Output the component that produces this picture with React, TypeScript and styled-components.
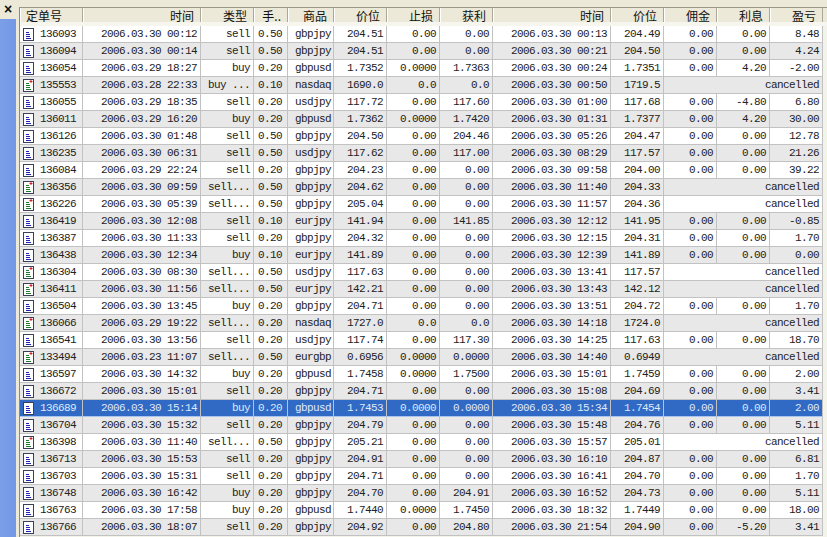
import * as React from 'react';
import styled, { createGlobalStyle } from 'styled-components';

const COLUMNS = '63px 118px 53px 34px 46px 53px 53px 53px 118px 53px 53px 53px 53px';

const GlobalStyle = createGlobalStyle`
  html, body {
    margin: 0;
    padding: 0;
    width: 827px;
    height: 537px;
    overflow: hidden;
    background: #ece9d8;
  }
`;

const Page = styled.div`
  display: flex;
  width: 827px;
  height: 537px;
  overflow: hidden;
  font-family: "Liberation Mono", "DejaVu Sans Mono", monospace;
  font-size: 11px;
  letter-spacing: -0.6px;
  color: #222;
`;

const Sidebar = styled.aside`
  display: flex;
  flex-direction: column;
  width: 16px;
  flex: none;
`;

const CloseBar = styled.div`
  height: 19px;
  flex: none;
  background: #ece9d8;
  color: #111;
  font: bold 14px/19px "Liberation Sans", sans-serif;
  letter-spacing: 0;
  text-align: center;
`;

const SideFill = styled.div`
  flex: 1;
  background: linear-gradient(90deg, #7c9fe8 0%, #7497e6 100%);
`;

const Gutter = styled.div`
  width: 3px;
  flex: none;
  background: #ece9d8;
`;

const TablePanel = styled.main`
  flex: 1;
  margin-top: 7px;
  border-top: 1px solid #9a9888;
  border-left: 1px solid #8c8a7c;
  background: #f4f3ea;
`;

const HeaderRow = styled.div`
  display: grid;
  grid-template-columns: ${COLUMNS};
  height: 14px;
  padding-bottom: 4px;
  background: linear-gradient(180deg, #ece9d8 0 14px, #f6f5ee 14px 100%);
`;

const HeaderCell = styled.div<{ $left?: boolean }>`
  box-sizing: border-box;
  height: 14px;
  padding: 0 6px 0 5px;
  background: #ece9d8;
  border-left: 1px solid #fff;
  border-right: 1px solid #aca899;
  font: 12px/15px "Noto Sans CJK SC", "Liberation Sans", sans-serif;
  letter-spacing: 0;
  color: #111;
  text-align: ${(p) => (p.$left ? 'left' : 'right')};
  white-space: nowrap;
`;

const Row = styled.div<{ $shade: boolean; $selected: boolean }>`
  display: grid;
  grid-template-columns: ${COLUMNS};
  width: 803px;
  height: 17px;
  box-sizing: border-box;
  border-bottom: 1px solid ${(p) => (p.$selected ? '#a9c4ee' : '#c2c2c2')};
  background: ${(p) => (p.$selected ? '#316ac5' : p.$shade ? '#e8e8e8' : '#fff')};
  color: ${(p) => (p.$selected ? '#dfe9fa' : '#222')};
`;

const Cell = styled.div<{ $span?: number; $inset?: number }>`
  box-sizing: border-box;
  grid-column: span ${(p) => p.$span ?? 1};
  padding: 0 ${(p) => p.$inset ?? 3}px 0 2px;
  border-right: 1px solid #c2c2c2;
  line-height: 16px;
  text-align: right;
  white-space: pre;
  overflow: hidden;
`;

const TicketCell = styled(Cell)`
  display: flex;
  align-items: center;
  gap: 6px;
  padding: 0 0 0 3px;
  text-align: left;
`;

const HEADERS = ['定单号', '时间', '类型', '手..', '商品', '价位', '止损', '获利', '时间', '价位', '佣金', '利息', '盈亏'];

type Order = [string, string, string, string, string, string, string, string, string, string, ...string[]];

const RAW = `136093|03.30 00:12|sell|0.50|gbpjpy|204.51|0.00|0.00|00:13|204.49|0.00|0.00|8.48
136094|03.30 00:14|sell|0.50|gbpjpy|204.51|0.00|0.00|00:21|204.50|0.00|0.00|4.24
136054|03.29 18:27|buy|0.20|gbpusd|1.7352|0.0000|1.7363|00:24|1.7351|0.00|4.20|-2.00
135553|03.28 22:33|buy ...|0.10|nasdaq|1690.0|0.0|0.0|00:50|1719.5
136055|03.29 18:35|sell|0.20|usdjpy|117.72|0.00|117.60|01:00|117.68|0.00|-4.80|6.80
136011|03.29 16:20|buy|0.20|gbpusd|1.7362|0.0000|1.7420|01:31|1.7377|0.00|4.20|30.00
136126|03.30 01:48|sell|0.50|gbpjpy|204.50|0.00|204.46|05:26|204.47|0.00|0.00|12.78
136235|03.30 06:31|sell|0.50|usdjpy|117.62|0.00|117.00|08:29|117.57|0.00|0.00|21.26
136084|03.29 22:24|sell|0.20|gbpjpy|204.23|0.00|0.00|09:58|204.00|0.00|0.00|39.22
136356|03.30 09:59|sell...|0.50|gbpjpy|204.62|0.00|0.00|11:40|204.33
136226|03.30 05:39|sell...|0.50|gbpjpy|205.04|0.00|0.00|11:57|204.36
136419|03.30 12:08|sell|0.10|eurjpy|141.94|0.00|141.85|12:12|141.95|0.00|0.00|-0.85
136387|03.30 11:33|sell|0.20|gbpjpy|204.32|0.00|0.00|12:15|204.31|0.00|0.00|1.70
136438|03.30 12:34|buy|0.10|eurjpy|141.89|0.00|0.00|12:39|141.89|0.00|0.00|0.00
136304|03.30 08:30|sell...|0.50|usdjpy|117.63|0.00|0.00|13:41|117.57
136411|03.30 11:56|sell...|0.50|eurjpy|142.21|0.00|0.00|13:43|142.12
136504|03.30 13:45|buy|0.20|gbpjpy|204.71|0.00|0.00|13:51|204.72|0.00|0.00|1.70
136066|03.29 19:22|sell...|0.20|nasdaq|1727.0|0.0|0.0|14:18|1724.0
136541|03.30 13:56|sell|0.20|usdjpy|117.74|0.00|117.30|14:25|117.63|0.00|0.00|18.70
133494|03.23 11:07|sell...|0.50|eurgbp|0.6956|0.0000|0.0000|14:40|0.6949
136597|03.30 14:32|buy|0.20|gbpusd|1.7458|0.0000|1.7500|15:01|1.7459|0.00|0.00|2.00
136672|03.30 15:01|sell|0.20|gbpjpy|204.71|0.00|0.00|15:08|204.69|0.00|0.00|3.41
136689|03.30 15:14|buy|0.20|gbpusd|1.7453|0.0000|0.0000|15:34|1.7454|0.00|0.00|2.00
136704|03.30 15:32|sell|0.20|gbpjpy|204.79|0.00|0.00|15:48|204.76|0.00|0.00|5.11
136398|03.30 11:40|sell...|0.50|gbpjpy|205.21|0.00|0.00|15:57|205.01
136713|03.30 15:53|sell|0.20|gbpjpy|204.91|0.00|0.00|16:10|204.87|0.00|0.00|6.81
136703|03.30 15:31|sell|0.20|gbpjpy|204.71|0.00|0.00|16:41|204.70|0.00|0.00|1.70
136748|03.30 16:42|buy|0.20|gbpjpy|204.70|0.00|204.91|16:52|204.73|0.00|0.00|5.11
136763|03.30 17:58|buy|0.20|gbpusd|1.7440|0.0000|1.7450|18:32|1.7449|0.00|0.00|18.00
136766|03.30 18:07|sell|0.20|gbpjpy|204.92|0.00|204.80|21:54|204.90|0.00|-5.20|3.41`;

const ORDERS = RAW.split('\n').map((line) => line.split('|') as Order);

const TicketIcon = ({ pending }: { pending: boolean }) => {
  const ink = pending ? '#1f7a2e' : '#2222b8';
  return (
    <svg width="11" height="13" viewBox="0 0 11 13" style={{ flex: 'none' }}>
      <rect x="0.5" y="0.5" width="10" height="12" fill="#fff" stroke="#3b3f58" />
      <path d="M3 4.5h3M3 6.5h4M3 8.5h4M3 10.5h5" stroke={ink} fill="none" />
      {pending && <path d="M8 1v3M6.5 2.5h3" stroke="#d81e1e" fill="none" />}
    </svg>
  );
};

const OrderRow = ({ order, index }: { order: Order; index: number }) => {
  const [ticket, open, type, lots, symbol, price, sl, tp, close, closePrice, ...money] = order;
  const pending = money.length === 0;
  return (
    <Row $shade={index % 2 === 1} $selected={ticket === '136689'}>
      <TicketCell>
        <TicketIcon pending={pending} />
        {ticket}
      </TicketCell>
      <Cell>{`2006.${open}`}</Cell>
      <Cell>{type}</Cell>
      <Cell $inset={5}>{lots}</Cell>
      <Cell $inset={2}>{symbol}</Cell>
      <Cell>{price}</Cell>
      <Cell>{sl}</Cell>
      <Cell>{tp}</Cell>
      <Cell>{`2006.03.30 ${close}`}</Cell>
      <Cell>{closePrice}</Cell>
      {pending ? (
        <Cell $span={3}>cancelled</Cell>
      ) : (
        money.map((value, i) => <Cell key={i}>{value}</Cell>)
      )}
    </Row>
  );
};

export default function App() {
  return (
    <Page>
      <GlobalStyle />
      <Sidebar>
        <CloseBar>×</CloseBar>
        <SideFill />
      </Sidebar>
      <Gutter />
      <TablePanel>
        <HeaderRow>
          {HEADERS.map((title, i) => (
            <HeaderCell key={i} $left={i === 0}>
              {title}
            </HeaderCell>
          ))}
        </HeaderRow>
        {ORDERS.map((order, i) => (
          <OrderRow key={order[0]} order={order} index={i} />
        ))}
      </TablePanel>
    </Page>
  );
}
